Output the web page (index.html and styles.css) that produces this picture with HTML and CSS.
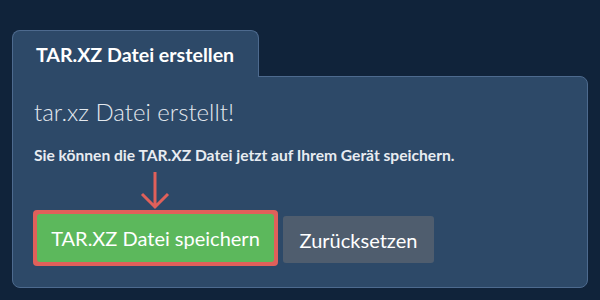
FILE: index.html
```html
<!DOCTYPE html>
<html>
<head>
  <title>TAR.XZ Datei erstellen</title>
  <link rel="stylesheet" href="styles.css">
</head>
<body>
  <div class="card">
    <div class="tab">TAR.XZ Datei erstellen</div>
    <div class="panel">
      <h3 class="done">tar.xz Datei erstellt!</h3>
      <p class="hint">Sie können die TAR.XZ Datei jetzt auf Ihrem Gerät speichern.</p>
      <div class="arrow">
        <svg width="30" height="40" viewBox="0 0 30 40">
          <path d="M15 2 V37 M2 24 L15 37 L28 24" fill="none" stroke="#e0605a" stroke-width="3"/>
        </svg>
      </div>
      <div class="actions">
        <div class="highlight">
          <button class="btn btn-save">TAR.XZ Datei speichern</button>
        </div>
        <button class="btn btn-reset">Zurücksetzen</button>
      </div>
    </div>
  </div>
</body>
</html>
```

FILE: styles.css
```css
body {
  font-family: 'Lato', 'Open Sans', sans-serif;
  background-color: #10233a;
  margin: 0;
  padding: 30px 12px 0 12px;
  color: #fff;
}
.card {
  width: 576px;
}
.tab {
  position: relative;
  z-index: 1;
  width: 222px;
  height: 46px;
  padding-left: 23px;
  margin-bottom: -1px;
  background-color: #2d4968;
  border: 1px solid #4d6a8e;
  border-bottom: none;
  border-radius: 8px 8px 0 0;
  font-size: 19.6px;
  font-weight: bold;
  line-height: 48px;
  box-sizing: content-box;
}
.panel {
  height: 210px;
  background-color: #2d4968;
  border: 1px solid #4d6a8e;
  border-radius: 0 8px 8px 8px;
  padding: 0 20px;
}
.done {
  margin: 20px 0 0 1px;
  font-size: 24px;
  font-weight: 300;
  line-height: 30px;
  color: #e3e8ee;
}
.hint {
  margin: 19px 0 0 1px;
  font-size: 15.6px;
  font-weight: bold;
  line-height: 18px;
  color: #e8ecf1;
}
.arrow {
  margin: 6px 0 0 107px;
  height: 40px;
}
.arrow svg {
  display: block;
}
.actions {
  display: flex;
  align-items: flex-start;
  gap: 5px;
}
.highlight {
  background-color: #e0605a;
  padding: 4px;
  border-radius: 4px;
}
.btn {
  font-family: 'Lato', 'Open Sans', sans-serif;
  font-size: 20px;
  color: #fff;
  border: none;
  border-radius: 3px;
  height: 48px;
  padding: 0 12px;
  cursor: pointer;
}
.btn-save {
  display: block;
  width: 237px;
  background-color: #5cb85c;
}
.btn-reset {
  margin-top: 6px;
  height: 47px;
  width: 151px;
  background-color: #4f5d6e;
}
```
